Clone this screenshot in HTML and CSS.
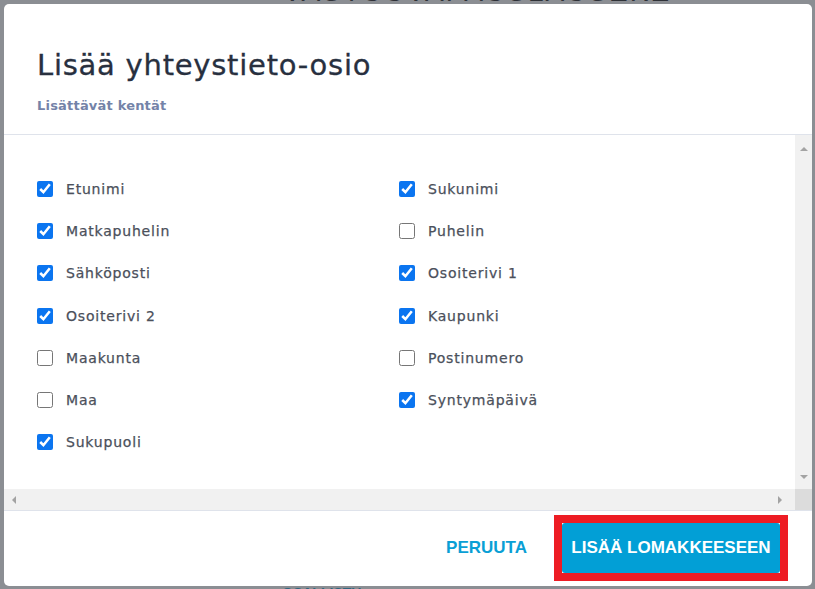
FILE: index.html
```html
<!DOCTYPE html>
<html lang="fi">
<head>
<meta charset="utf-8">
<title>Lisää yhteystieto-osio</title>
<link rel="stylesheet" href="styles.css">
</head>
<body>
<div class="backdrop">
  <div class="bg-heading">VASTUUVAPAUSLAUSEKE</div>
  <div class="bg-link">OSALLISTU</div>
</div>
<div class="modal">
  <header class="modal-head">
    <h1 class="title">Lisää yhteystieto-osio</h1>
    <div class="subtitle">Lisättävät kentät</div>
  </header>
  <div class="scroller">
    <div class="fields">
      <label class="field"><input type="checkbox" checked><span>Etunimi</span></label>
      <label class="field"><input type="checkbox" checked><span>Sukunimi</span></label>
      <label class="field"><input type="checkbox" checked><span>Matkapuhelin</span></label>
      <label class="field"><input type="checkbox"><span>Puhelin</span></label>
      <label class="field"><input type="checkbox" checked><span>Sähköposti</span></label>
      <label class="field"><input type="checkbox" checked><span>Osoiterivi 1</span></label>
      <label class="field"><input type="checkbox" checked><span>Osoiterivi 2</span></label>
      <label class="field"><input type="checkbox" checked><span>Kaupunki</span></label>
      <label class="field"><input type="checkbox"><span>Maakunta</span></label>
      <label class="field"><input type="checkbox"><span>Postinumero</span></label>
      <label class="field"><input type="checkbox"><span>Maa</span></label>
      <label class="field"><input type="checkbox" checked><span>Syntymäpäivä</span></label>
      <label class="field"><input type="checkbox" checked><span>Sukupuoli</span></label>
    </div>
    <div class="vbar">
      <span class="arrow up"></span>
      <span class="arrow down"></span>
    </div>
    <div class="hbar">
      <span class="arrow left"></span>
      <span class="arrow right"></span>
    </div>
    <div class="corner"></div>
  </div>
  <footer class="modal-foot">
    <button class="btn-text" type="button">PERUUTA</button>
    <span class="highlight">
      <button class="btn-primary" type="button">LISÄÄ LOMAKKEESEEN</button>
    </span>
  </footer>
</div>
</body>
</html>
```

FILE: styles.css
```css
* { box-sizing: border-box; }

html, body {
  margin: 0;
  width: 815px;
  height: 589px;
  overflow: hidden;
}

body {
  background: #8b8e93;
  font-family: "DejaVu Sans", "Open Sans", sans-serif;
  position: relative;
}

.backdrop {
  display: flex;
  flex-direction: column;
  height: 589px;
}

.bg-heading {
  margin-top: -24px;
  margin-left: 283px;
  font-family: "Liberation Sans", sans-serif;
  font-size: 28px;
  letter-spacing: 2px;
  color: #2f3238;
  line-height: 32px;
}

.bg-link {
  margin-top: auto;
  margin-left: 282px;
  margin-bottom: -12px;
  font-family: "Liberation Sans", sans-serif;
  font-weight: bold;
  font-size: 14px;
  color: #2f6680;
}

.modal {
  position: absolute;
  left: 4px;
  top: 4px;
  width: 808px;
  height: 582px;
  background: #fff;
  border-radius: 5px;
  display: flex;
  flex-direction: column;
  overflow: hidden;
}

.modal-head {
  padding: 41px 33px 0;
  height: 131px;
  border-bottom: 1px solid #dfe3eb;
}

.title {
  margin: 0;
  font-size: 29px;
  font-weight: normal;
  color: #28303f;
  line-height: 40px;
  letter-spacing: 0.75px;
  -webkit-text-stroke: 0.3px #28303f;
}

.subtitle {
  margin-top: 13px;
  font-size: 13px;
  font-weight: bold;
  color: #7483a8;
  letter-spacing: 0.2px;
}

.scroller {
  height: 376px;
  display: grid;
  grid-template-columns: 1fr 17px;
  grid-template-rows: 1fr 21px;
  border-bottom: 1px solid #dfe3eb;
}

.fields {
  padding: 33px 0 0 33px;
  display: grid;
  grid-template-columns: 362px 1fr;
  grid-auto-rows: 42.2px;
  align-content: start;
}

.field {
  display: flex;
  align-items: center;
  gap: 13px;
  font-size: 14px;
  color: #4b505b;
  letter-spacing: 0.8px;
  -webkit-text-stroke: 0.25px #4b505b;
}

.field input {
  margin: 0;
  width: 16px;
  height: 16px;
  accent-color: #0b75f0;
}

.vbar {
  background: #f1f1f1;
  display: flex;
  flex-direction: column;
  justify-content: space-between;
  align-items: center;
  padding: 12px 0 10px;
}

.hbar {
  background: #f1f1f1;
  display: flex;
  justify-content: space-between;
  align-items: center;
  padding: 0 13px 0 8px;
}

.corner {
  background: #dcdcdc;
}

.arrow {
  width: 0;
  height: 0;
  border: 4px solid transparent;
}

.arrow.up { border-bottom-color: #a3a3a3; border-top-width: 0; }
.arrow.down { border-top-color: #a3a3a3; border-bottom-width: 0; }
.arrow.left { border-right-color: #a3a3a3; border-left-width: 0; }
.arrow.right { border-left-color: #a3a3a3; border-right-width: 0; }

.modal-foot {
  flex: 1;
  display: flex;
  align-items: center;
  justify-content: flex-end;
  padding: 0 24px 1px 0;
  gap: 27px;
}

button {
  font-family: "Liberation Sans", Arial, sans-serif;
  font-weight: bold;
  font-size: 17px;
  border: 0;
  cursor: pointer;
}

.btn-text {
  background: none;
  color: #0a9fd5;
  padding: 0;
}

.highlight {
  display: flex;
  border: 8px solid #ed1c24;
}

.btn-primary {
  width: 218px;
  height: 50px;
  background: #029fd6;
  color: #fff;
  border-radius: 3px;
  padding: 0;
}
```
